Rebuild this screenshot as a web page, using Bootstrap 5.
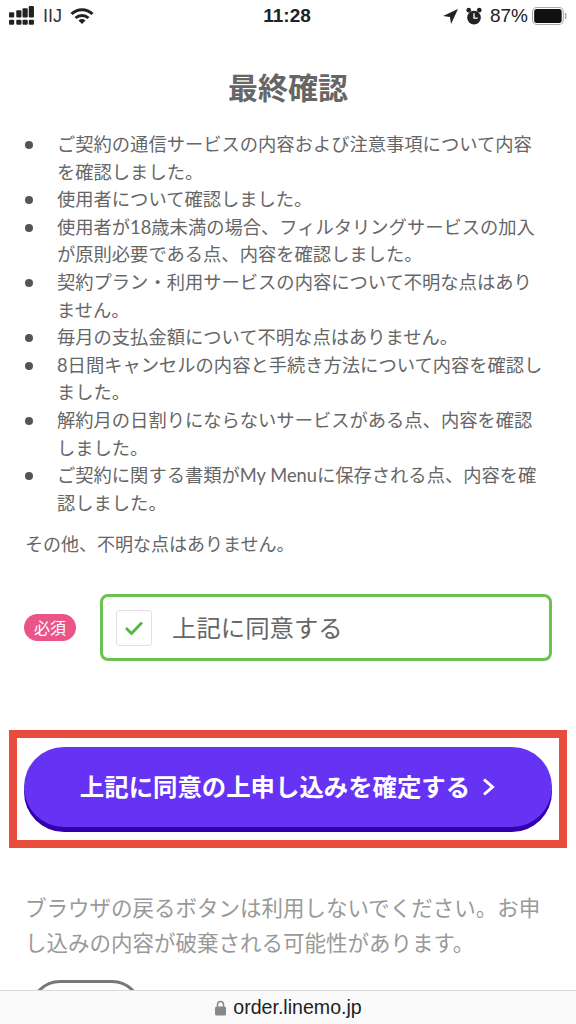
<!DOCTYPE html>
<html lang="ja"><head><meta charset="utf-8">
<link href="https://cdn.jsdelivr.net/npm/bootstrap@5.3.0/dist/css/bootstrap.min.css" rel="stylesheet">
<style>
html,body{height:1024px;overflow:hidden;background:#fff}
body{font-family:"Lato","Noto Sans CJK JP",sans-serif;color:#666;width:576px;display:flex;flex-direction:column}
.sbar{height:32px;padding:0 9px 0 9px;color:#222;font-family:"Liberation Sans",sans-serif;font-size:19px;flex:none}
.sbar>div{flex:1}
.carrier{font-size:18px;font-weight:400;color:#333}
.stime{font-weight:600;font-size:19px;text-align:center;color:#222;margin-left:-2px}
.pagebody{flex:1;min-height:0;overflow:hidden;padding:0 24px}
.ttl{font-size:30px;font-weight:700;line-height:40px;margin:35px 0 24px;color:#666;text-align:center}
.terms{list-style:none;margin:0;padding:0 4px 0 0;font-size:18.3px;line-height:27.6px}
.terms li{padding-left:33px;position:relative}
.terms li::before{content:"";position:absolute;left:1px;top:10px;width:8px;height:8px;border-radius:50%;background:#555}
.other{font-size:18px;line-height:27px;margin:14px 0 0 1px}
.agree{margin-top:36px}
.req{background:#ea5488;color:#fff;font-size:16px;line-height:27px;width:52px;border-radius:14px;text-align:center;flex:none}
.chkbox{border:3px solid #6cc24f;border-radius:8px;height:67px;margin-left:24px;flex:1;padding-left:13px;background:#fff}
.tick{width:36px;height:36px;border:1px solid #e0e0e0;border-radius:3px;margin-right:20px;flex:none}
.chklabel{font-size:24.4px;color:#666}
.redframe{border:8px solid #e84c3d;margin:69px -15px 0 -15px;height:118px;padding:0 7px;background:#fff}
.cta{background:#6633f4;color:#fff;border:0;border-radius:43px;height:80px;width:100%;margin-top:9px;font-size:24.4px;font-weight:700;box-shadow:0 5px 0 #3300aa;gap:12px}
.cta:hover,.cta:active{background:#6633f4;color:#fff}
.note{font-size:21.5px;line-height:35px;color:#999;margin:43px 0 0 1px}
.pill{width:112px;height:60px;border:3px solid #777;border-radius:30px;margin:19px 0 0 6px}
.urlbar{height:34px;flex:none;background:#fafafa;border-top:1px solid #d8d8d8;font-family:"Liberation Sans",sans-serif;font-size:19.6px;color:#222;gap:6px}
</style></head><body>
<div class="sbar d-flex align-items-center">
 <div class="d-flex align-items-center gap-2">
  <svg width="26" height="20" viewBox="0 0 25 19" fill="#222"><g><rect x="0" y="6" width="5" height="5" rx="1"/><rect x="7" y="4" width="5" height="7" rx="1"/><rect x="13" y="2" width="5" height="9" rx="1"/><rect x="19" y="0" width="5" height="11" rx="1"/><rect x="0" y="13" width="5" height="5" rx="1"/><rect x="7" y="13" width="5" height="5" rx="1"/><rect x="13" y="13" width="5" height="5" rx="1"/><rect x="19" y="13" width="5" height="5" rx="1"/></g></svg>
  <span class="carrier">IIJ</span>
  <svg width="24" height="18" viewBox="0 0 24 18" fill="none" stroke="#222" stroke-width="3"><path d="M1.500 7a15 15 0 0 1 21 0"/><path d="M5.500 11a9.500 9.500 0 0 1 13 0"/><path d="M12 17l-3.500-3.500a5 5 0 0 1 7 0z" fill="#222" stroke="none"/></svg>
 </div>
 <div class="stime">11:28</div>
 <div class="d-flex align-items-center justify-content-end gap-2">
  <svg width="15" height="15" viewBox="0 0 14 14" fill="#222"><path d="M14 0L0 6.500l6.500 1 1 6.500z"/></svg>
  <svg width="16" height="19" viewBox="0 0 15 18"><circle cx="7.500" cy="10" r="6.500" fill="#222"/><path d="M7.500 6v4.500H11" stroke="#fff" stroke-width="1.300" fill="none"/><circle cx="2.500" cy="3" r="2.200" fill="#222"/><circle cx="12.500" cy="3" r="2.200" fill="#222"/></svg>
  <div class="d-flex align-items-center gap-1"><span>87%</span>
  <svg width="35" height="18" viewBox="0 0 33 17"><rect x=".5" y=".5" width="29" height="16" rx="4" fill="none" stroke="#aaa"/><rect x="2" y="2" width="26" height="13" rx="2.500" fill="#111"/><rect x="31" y="5.500" width="1.500" height="6" rx=".7" fill="#aaa"/></svg></div>
 </div>
</div>
<div class="pagebody">
 <h1 class="ttl">最終確認</h1>
 <ul class="terms">
  <li>ご契約の通信サービスの内容および注意事項について内容を確認しました。</li>
  <li>使用者について確認しました。</li>
  <li>使用者が18歳未満の場合、フィルタリングサービスの加入が原則必要である点、内容を確認しました。</li>
  <li>契約プラン・利用サービスの内容について不明な点はありません。</li>
  <li>毎月の支払金額について不明な点はありません。</li>
  <li>8日間キャンセルの内容と手続き方法について内容を確認しました。</li>
  <li>解約月の日割りにならないサービスがある点、内容を確認しました。</li>
  <li>ご契約に関する書類がMy Menuに保存される点、内容を確認しました。</li>
 </ul>
 <p class="other">その他、不明な点はありません。</p>
 <div class="agree d-flex align-items-center">
  <span class="req">必須</span>
  <div class="chkbox d-flex align-items-center">
   <span class="tick d-flex align-items-center justify-content-center"><svg width="20" height="16" viewBox="0 0 20 16" fill="none" stroke="#52b83f" stroke-width="2.800"><path d="M2 8l5.500 5.500L18 2.500"/></svg></span>
   <span class="chklabel">上記に同意する</span>
  </div>
 </div>
 <div class="redframe">
  <button class="cta btn d-flex align-items-center justify-content-center" type="button">上記に同意の上申し込みを確定する
   <svg width="14" height="20" viewBox="0 0 14 20" fill="none" stroke="#fff" stroke-width="3"><path d="M2 2.500l8.500 7.500L2 17.500"/></svg></button>
 </div>
 <p class="note">ブラウザの戻るボタンは利用しないでください。お申し込みの内容が破棄される可能性があります。</p>
 <div class="pill"></div>
</div>
<div class="urlbar d-flex align-items-center justify-content-center">
 <svg width="13" height="16" viewBox="0 0 13 16" fill="#888"><path d="M3.500 7V4.500a3 3 0 0 1 6 0V7" fill="none" stroke="#888" stroke-width="1.500"/><rect x="1" y="6.500" width="11" height="9" rx="1.500"/></svg>
 <span>order.linemo.jp</span>
</div>
<script src="https://cdn.jsdelivr.net/npm/bootstrap@5.3.0/dist/js/bootstrap.bundle.min.js"></script>
</body></html>
